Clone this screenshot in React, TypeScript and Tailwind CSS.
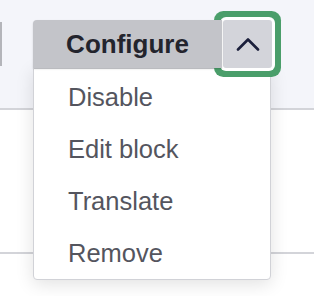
import React from 'react';

const items = ['Disable', 'Edit block', 'Translate', 'Remove'];

const ChevronUp: React.FC = () => (
  <svg width="24" height="14" viewBox="0 0 24 14" fill="none">
    <path d="M2 12.5 L12 2.5 L22 12.5" stroke="#1b1f3b" strokeWidth="2.6" strokeLinecap="round" strokeLinejoin="round" />
  </svg>
);

export default function App() {
  return (
    <div className="relative w-[314px] h-[296px] bg-white overflow-hidden" style={{ fontFamily: '"Liberation Sans", Arial, sans-serif' }}>
      <div className="h-[110px] bg-[#f4f5fa] border-b-2 border-[#d3d4d9] pt-[22px]">
        <div className="w-[2px] h-[44px] bg-[#b4b5ba]" />
      </div>
      <div className="h-[144px] border-b-2 border-[#d3d4d9]" />

      <div className="absolute left-[33px] top-[20px]">
        <div className="flex">
          <button className="relative z-30 w-[189px] h-12 rounded-tl-[4px] bg-[#c3c4c9] text-[26px] font-bold text-[#23242d] shadow-[0_1px_2px_rgba(0,0,0,0.15)]">
            Configure
          </button>
          <button className="relative z-20 ml-px w-[49px] h-12 rounded-[3px] bg-[#d3d4da] flex items-center justify-center shadow-[0_0_0_3px_#ffffff,0_0_0_9px_#4a9e6a]">
            <ChevronUp />
          </button>
        </div>
        <div className="absolute z-10 left-0 top-12 w-[238px] pt-[2px] bg-white border border-[#d1d2d7] rounded-b-[4px] shadow-[0_4px_18px_rgba(0,0,0,0.12)]">
          {items.map((label) => (
            <div key={label} className="h-[52px] flex items-center pl-[34px] text-[25.5px] text-[#54555e]">
              {label}
            </div>
          ))}
        </div>
      </div>
    </div>
  );
}
